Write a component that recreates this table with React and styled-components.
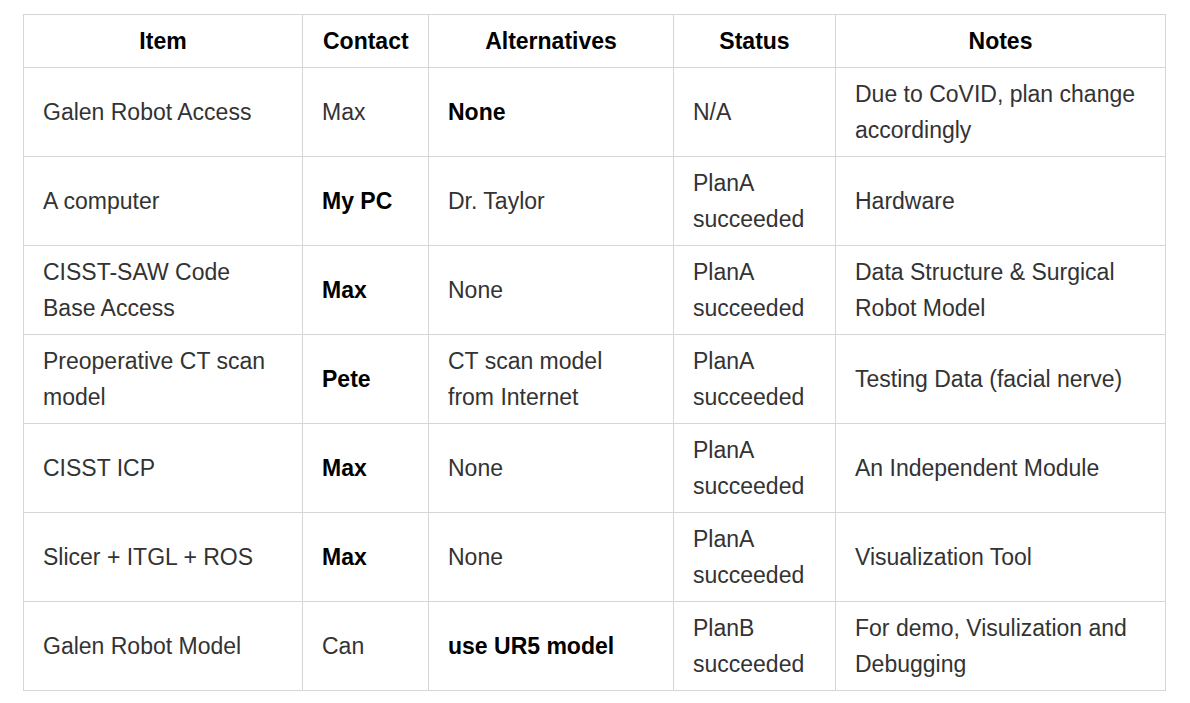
import styled, { createGlobalStyle } from "styled-components";

const GlobalStyle = createGlobalStyle`
  body {
    margin: 0;
    background: #fff;
    font-family: "Liberation Sans", Arial, sans-serif;
  }
`;

const Page = styled.div`
  padding: 14px 23px;
`;

const Table = styled.table`
  border-collapse: collapse;
  table-layout: fixed;
  width: 1143px;
  font-size: 23px;
  line-height: 36px;
  color: #333;
`;

const Th = styled.th`
  border: 1px solid #d6d6d6;
  padding: 8px 20px;
  font-weight: bold;
  color: #000;
  text-align: center;
`;

const Td = styled.td`
  border: 1px solid #d6d6d6;
  padding: 8px 19px;
  vertical-align: middle;
  text-align: left;
  font-weight: ${(p) => (p.$bold ? "bold" : "normal")};
  color: ${(p) => (p.$bold ? "#000" : "#333")};
`;

const columns = [
  { title: "Item", width: 279 },
  { title: "Contact", width: 126 },
  { title: "Alternatives", width: 245 },
  { title: "Status", width: 162 },
  { title: "Notes", width: 330 },
];

const rows = [
  {
    item: "Galen Robot Access",
    contact: ["Max", false],
    alt: ["None", true],
    status: "N/A",
    notes: "Due to CoVID, plan change accordingly",
  },
  {
    item: "A computer",
    contact: ["My PC", true],
    alt: ["Dr. Taylor", false],
    status: "PlanA succeeded",
    notes: "Hardware",
  },
  {
    item: "CISST-SAW Code Base Access",
    contact: ["Max", true],
    alt: ["None", false],
    status: "PlanA succeeded",
    notes: "Data Structure & Surgical Robot Model",
  },
  {
    item: "Preoperative CT scan model",
    contact: ["Pete", true],
    alt: ["CT scan model from Internet", false],
    status: "PlanA succeeded",
    notes: "Testing Data (facial nerve)",
  },
  {
    item: "CISST ICP",
    contact: ["Max", true],
    alt: ["None", false],
    status: "PlanA succeeded",
    notes: "An Independent Module",
  },
  {
    item: "Slicer + ITGL + ROS",
    contact: ["Max", true],
    alt: ["None", false],
    status: "PlanA succeeded",
    notes: "Visualization Tool",
  },
  {
    item: "Galen Robot Model",
    contact: ["Can", false],
    alt: ["use UR5 model", true],
    status: "PlanB succeeded",
    notes: "For demo, Visulization and Debugging",
  },
];

export default function App() {
  return (
    <>
      <GlobalStyle />
      <Page>
        <Table>
          <colgroup>
            {columns.map((c) => (
              <col key={c.title} style={{ width: c.width }} />
            ))}
          </colgroup>
          <thead>
            <tr>
              {columns.map((c) => (
                <Th key={c.title}>{c.title}</Th>
              ))}
            </tr>
          </thead>
          <tbody>
            {rows.map((r) => (
              <tr key={r.item}>
                <Td>{r.item}</Td>
                <Td $bold={r.contact[1]}>{r.contact[0]}</Td>
                <Td $bold={r.alt[1]}>{r.alt[0]}</Td>
                <Td>{r.status}</Td>
                <Td>{r.notes}</Td>
              </tr>
            ))}
          </tbody>
        </Table>
      </Page>
    </>
  );
}
